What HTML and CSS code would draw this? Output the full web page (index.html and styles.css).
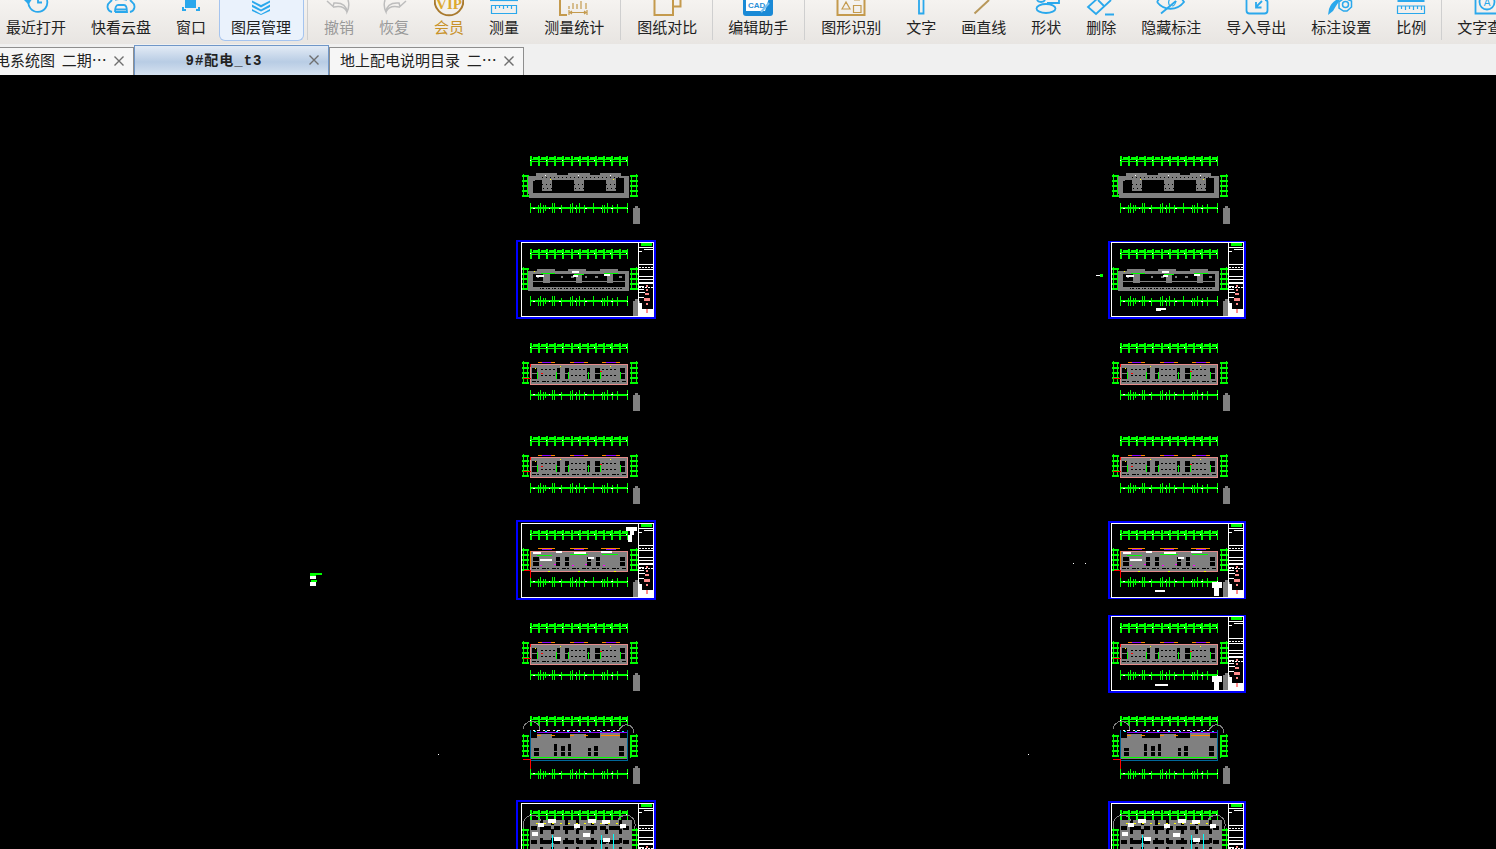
FILE: index.html
```html
<!DOCTYPE html>
<html lang="zh-CN">
<head>
    <meta charset="UTF-8">
    <meta name="viewport" content="width=device-width, initial-scale=1.0">
    <title>9#配电_t3</title>
    <link rel="stylesheet" href="styles.css">
</head>
<body>
    <!-- 工具栏 -->
    <div class="toolbar">
        <div class="tool">
            <svg class="ic blue" viewBox="0 0 30 18"><path d="M7.500 0.500A9.500 9.500 0 1 0 26 0"/><path class="solid" d="M3 0H10.500L7.500 4.500Z"/><path d="M17 -2V2.500H21"/></svg>
            <span>最近打开</span>
        </div>
        <div class="tool">
            <svg class="ic blue" viewBox="0 0 30 18"><path d="M6 12C1 11 0 5 4 2Q5 1 6 0M24 12C29 11 30 5 26 2Q25 1 24 0M9 0Q15 -2 21 0"/><path d="M9 12C9 8 10 5 12 5H18C20 5 21 8 21 12H9M10 9.500H20"/></svg>
            <span>快看云盘</span>
        </div>
        <div class="tool">
            <svg class="ic blue" viewBox="0 0 30 18"><path class="solid" d="M9 -2H20V8H9Z"/><path d="M7 7V10H10M23 7V10H20" stroke-width="2"/></svg>
            <span>窗口</span>
        </div>
        <div class="tool active">
            <svg class="ic blue" viewBox="0 0 30 18"><path class="solid" d="M6 0.500L15 5L24 0.500V2.500L15 7.500L6 2.500Z"/><path class="solid" d="M6 4.500L15 9.500L24 4.500V7L15 11.500L6 7Z"/><path class="solid" d="M6 9L15 14L24 9V11L15 15L6 11Z"/></svg>
            <span>图层管理</span>
        </div>
        <div class="sep"></div>
        <div class="tool off">
            <svg class="ic grey" viewBox="0 0 30 18"><path d="M3 1L9 6.500L10 3Q22 2 23 12Q26 6 24 0"/><path d="M23 12Q20 5 10 7L9 7"/></svg>
            <span>撤销</span>
        </div>
        <div class="tool off">
            <svg class="ic grey" viewBox="0 0 30 18"><path d="M27 1L21 6.500L20 3Q8 2 7 12Q4 6 6 0"/><path d="M7 12Q10 5 20 7L21 7"/></svg>
            <span>恢复</span>
        </div>
        <div class="tool vip">
            <svg class="ic" viewBox="0 0 30 18"><circle class="vip-ring" cx="15" cy="1" r="14.300"/><text class="vip-text" x="15" y="9" text-anchor="middle">VIP</text></svg>
            <span>会员</span>
        </div>
        <div class="tool">
            <svg class="ic blue thin" viewBox="0 0 30 18"><path d="M1 0.500H29"/><path d="M2.500 5.500H27.500V13.500H2.500Z"/><path d="M6.500 5.500V9M10.500 5.500V8M14.500 5.500V9M18.500 5.500V8M22.500 5.500V9"/></svg>
            <span>测量</span>
        </div>
        <div class="tool">
            <svg class="ic gold" viewBox="0 0 30 18"><path d="M1 0V15H8" stroke-width="2"/></svg>
            <svg class="ic-over gold thin" viewBox="0 0 30 18"><path d="M10 6V9M14 3V9M18 4V9M22 1V9M27 3V9"/><path d="M10 10V15M28 10V15M11 12.500H27M13 11L11 12.500L13 14M25 11L27 12.500L25 14"/></svg>
            <span>测量统计</span>
        </div>
        <div class="sep"></div>
        <div class="tool">
            <svg class="ic gold" viewBox="0 0 30 18"><path d="M2.500 0V15H21V0M21 6.500H28.500V0" stroke-width="2"/></svg>
            <span>图纸对比</span>
        </div>
        <div class="sep tight"></div>
        <div class="tool">
            <svg class="ic" viewBox="0 0 30 18"><path class="cad-box" d="M0 -2H30V13Q30 16 27 16H3Q0 16 0 13Z"/><path class="cad-doc" d="M3 -2H26L22 11H3Z"/><text class="cad-text" x="5" y="7.500">CAD</text><path class="cad-pen" d="M26 3L18 12"/></svg>
            <span>编辑助手</span>
        </div>
        <div class="sep"></div>
        <div class="tool">
            <svg class="ic gold" viewBox="0 0 30 18"><path d="M1.500 0V15H28.500V0" stroke-width="2"/><path class="thin" d="M6 9L10 2L14 9ZM17.500 5.500H25V12.500H17.500ZM18 0H24"/></svg>
            <span>图形识别</span>
        </div>
        <div class="tool">
            <svg class="ic blue" viewBox="0 0 30 18"><path d="M13 -2V13.500H17.500V-2"/></svg>
            <span>文字</span>
        </div>
        <div class="tool">
            <svg class="ic tan" viewBox="0 0 30 18"><path d="M5.500 13.500L20 0" stroke-width="2"/></svg>
            <span>画直线</span>
        </div>
        <div class="tool">
            <svg class="ic blue" viewBox="0 0 30 18"><ellipse cx="15" cy="8.500" rx="9.500" ry="4.500"/><path d="M6 0Q7 2 10 2Q13 2 14 0M16 3H28V-2"/></svg>
            <span>形状</span>
        </div>
        <div class="tool">
            <svg class="ic blue" viewBox="0 0 30 18"><path d="M12 -2L2 7L10 14L25 0M19 14.500H28"/><path d="M12 0L18 6"/></svg>
            <span>删除</span>
        </div>
        <div class="tool">
            <svg class="ic blue" viewBox="0 0 30 18"><path d="M1 2C8 11 21 11 28 2L26 -1M1 2L3 -1"/><path d="M5 13.500L20 1"/><path d="M14 -2Q11 4 14.500 6M20 1Q19 6 16 6" class="thin"/></svg>
            <span>隐藏标注</span>
        </div>
        <div class="tool">
            <svg class="ic blue" viewBox="0 0 30 18"><path d="M5.500 0V10.500Q5.500 13.500 8.500 13.500H23.500Q26.500 13.500 26.500 10.500V2Q26.500 0 24 0"/><path d="M21 1L15 7M15 2V7.500H20.500"/></svg>
            <span>导入导出</span>
        </div>
        <div class="tool">
            <svg class="ic blue" viewBox="0 0 30 18"><path class="solid" d="M2 15L3 9Q5 3 10 0L14 0L10 6L7 11Z"/><path d="M20.500 -1L25.500 1V7L21 11H17.500L13 8V2L17 -1Z" stroke-width="1.500"/><circle cx="19.500" cy="4.500" r="3" stroke-width="1.500"/></svg>
            <span>标注设置</span>
        </div>
        <div class="tool">
            <svg class="ic blue thin" viewBox="0 0 30 18"><path d="M1.500 1H28.500" stroke-width="2"/><path d="M1.500 6H28.500V13.500H1.500Z"/><path d="M5.500 6V9M9.500 6V10M13.500 6V9M17.500 6V10M21.500 6V9M25.500 6V10"/></svg>
            <span>比例</span>
        </div>
        <div class="sep tight"></div>
        <div class="tool">
            <svg class="ic blue" viewBox="0 0 30 18"><path d="M3.500 0V13.500H28"/><circle cx="15" cy="2" r="7.500"/><text class="icon-a" x="15" y="6" text-anchor="middle">A</text></svg>
            <span>文字查找</span>
        </div>
    </div>

    <!-- 标签 -->
    <div class="tabbar">
        <div class="tab first">
            <span class="tab-name">低压配电系统图&nbsp;&nbsp;二期⋯</span>
            <svg class="tab-close" viewBox="0 0 10 10"><path d="M0.500 0.500L9.500 9.500M9.500 0.500L0.500 9.500"/></svg>
        </div>
        <div class="tab current">
            <span class="tab-name">9#配电_t3</span>
            <svg class="tab-close" viewBox="0 0 10 10"><path d="M0.500 0.500L9.500 9.500M9.500 0.500L0.500 9.500"/></svg>
        </div>
        <div class="tab">
            <span class="tab-name">地上配电说明目录&nbsp;&nbsp;二⋯</span>
            <svg class="tab-close" viewBox="0 0 10 10"><path d="M0.500 0.500L9.500 9.500M9.500 0.500L0.500 9.500"/></svg>
        </div>
    </div>

    <!-- 图纸区域 -->
    <div class="canvas">
        <svg class="drawing" viewBox="0 75 1496 774" width="1496" height="774" shape-rendering="crispEdges">
            <defs>
                <!-- 轴线标注 -->
                <g id="stripBottom" fill="none" stroke="#0f0">
                    <path d="M530 208H628" stroke-width="2"/>
                    <path d="M530.500 203V213M538.500 205V213M540.500 203V213M543.500 205V213M545.500 205V211M552.500 203V213M554.500 203V213M561.500 205V213M570.500 204V213M572.500 203V213M576.500 205V213M579.500 203V213M584.500 205V213M593.500 203V213M602.500 205V213M604.500 205V213M607.500 203V213M612.500 205V213M617.500 204V213M627.500 203V213" stroke-width="1.500"/>
                    <path d="M533 208H628" stroke="#fff" stroke-dasharray="2 14 1 9"/>
                </g>
                <g id="stripMain" fill="none" stroke="#0f0">
                    <path d="M530 159.500H628M530 161.500H628"/>
                    <path d="M530 161H628" stroke-width="10" stroke-dasharray="2 6.100"/>
                    <path d="M533 158H628" stroke-width="2" stroke-dasharray="5 3.100"/>
                    <path d="M523.500 174V197M527.500 176V195"/>
                    <path d="M525.500 175V197" stroke-width="7" stroke-dasharray="2 3"/>
                    <path d="M631.500 176V195M636.500 174V197"/>
                    <path d="M634 175V197" stroke-width="8" stroke-dasharray="2 3"/>
                    <path d="M530 160.500H628" stroke="#fff" stroke-dasharray="1 15"/>
                    <path d="M633 208H635V206H638V208H640V224H633Z" fill="#808080" stroke="none"/>
                </g>
                <g id="strips">
                    <use href="#stripMain"/>
                    <use href="#stripBottom"/>
                </g>

                <!-- 平面 A -->
                <g id="planA">
                    <path fill="#808080" d="M528 176H536V173H557V175H568V173H590V175H600V173H621V176H629V198H529V194H528ZM533 181V193H624V178H616V191H606V180H584V191H574V180H552V191H542V180H535V181Z"/>
                    <path fill="none" stroke="#000" d="M542 177H622M542 184H616M543 188H616" stroke-dasharray="1 3"/>
                    <path fill="#fff" d="M545 175h1v1h-1zM578 175h1v1h-1zM610 175h1v1h-1z"/>
                    <path fill="#ff0" d="M550 179h1v1h-1zM613 179h1v1h-1z"/>
                </g>

                <!-- 平面 B -->
                <g id="planB">
                    <path fill="#808080" d="M528 178H537V176H555V178H568V176H586V178H600V176H618V178H629V198H528ZM533 181V194H625V181H613V190H607V181H582V190H576V181H550V190H543V181Z"/>
                    <path fill="none" stroke="#808080" d="M533 188H625"/>
                    <path fill="none" stroke="#000" d="M540 195.500H624" stroke-dasharray="1 1 2 2"/>
                    <path fill="none" stroke="#808080" d="M537 184H622" stroke-width="2" stroke-dasharray="2 8 3 11"/>
                    <path fill="none" stroke="#0f0" d="M541 180.500H555M574 181.500H584M604 180.500H618"/>
                    <path fill="none" stroke="#fff" stroke-width="2" d="M536 182.500H544M572 179H579M573 183H578M604 182H610"/>
                    <path fill="#ff0" d="M534 178h1v1h-1z"/>
                </g>

                <!-- 平面 C -->
                <g id="planC">
                    <path fill="#808080" d="M530 177H628V198H530Z"/>
                    <path fill="#000" d="M532 181h5v11h-5zM557 181h3v11h-3zM565 181h4v11h-4zM587 181h3v11h-3zM595 181h5v11h-5zM620 181h5v11h-5z"/>
                    <path fill="none" stroke="#808080" d="M532 186.500H625"/>
                    <path fill="none" stroke="#000" d="M541 183H556M571 183H586M602 183H618M541 189H556M571 189H586M602 189H618" stroke-dasharray="2 2"/>
                    <path fill="none" stroke="#000" d="M532 194.500H626" stroke-dasharray="4 1 2 3"/>
                    <path fill="none" stroke="#e58a8a" d="M530.500 177.500H627.500V197.500H530.500Z"/>
                    <path fill="none" stroke="#0f0" d="M537.500 185V192M556.500 185V192M568.500 185V192M588.500 185V192M600.500 185V192M620.500 185V192"/>
                    <path fill="none" stroke="#f80" d="M538 175.500H542M551 175.500H555M570 175.500H574M584 175.500H588M602 175.500H606M616 175.500H620"/>
                    <path fill="none" stroke="#80f" d="M542 175.500H551M574 175.500H584M606 175.500H616"/>
                    <path fill="#f00" d="M523 191h8v1h-8zM530 177h1v3h-1zM541 186h2v1h-2zM600 184h2v1h-2z"/>
                    <path fill="#ff0" d="M535 181h1v1h-1zM560 179h1v1h-1zM610 179h1v1h-1z"/>
                </g>

                <!-- 平面 E -->
                <g id="planE">
                    <path fill="#808080" d="M530 177H628V197H530Z"/>
                    <path fill="#000" d="M533 183h6v9h-6zM556 183h4v9h-4zM565 183h4v9h-4zM587 183h4v9h-4zM596 183h4v9h-4zM620 183h5v9h-5z"/>
                    <path fill="none" stroke="#808080" d="M532 187.500H625"/>
                    <path fill="none" stroke="#000" d="M532 194.500H626" stroke-dasharray="4 1 2 3"/>
                    <path fill="none" stroke="#e58a8a" d="M530.500 177.500H627.500V197.500H530.500Z"/>
                    <path fill="none" stroke="#f80" d="M530.500 177V193M538 175H555M570 175H588M601 175H620"/>
                    <path fill="none" stroke="#80f" d="M542 175.500H552M574 175.500H584M606 175.500H616"/>
                    <path fill="none" stroke="#fff" stroke-width="2" d="M533 179H541M540 186H552M556 178H562M574 179H586M601 178H612M588 184H594"/>
                    <path fill="none" stroke="#0f0" d="M537 182H552M570 181H588M602 181H618"/>
                    <path fill="#f0f" d="M540 191h2v1h-2zM572 191h2v1h-2zM603 191h2v1h-2zM554 190h2v1h-2zM585 190h2v1h-2z"/>
                    <path fill="#ff0" d="M548 197h2v1h-2zM578 197h2v1h-2zM614 197h2v1h-2z"/>
                    <path fill="#f00" d="M530 196h1v8h-1zM524 196h7v1h-7z"/>
                </g>

                <!-- 平面 G -->
                <g id="planG">
                    <path fill="#808080" d="M531 178H537V174H552V178H570V174H586V178H600V173H620V178H627V199H531Z"/>
                    <path fill="#000" d="M534 188h5v8h-5zM554 184h3v12h-3zM561 186h4v10h-4zM568 184h3v12h-3zM588 188h3v8h-3zM594 186h4v10h-4zM619 186h5v10h-5z"/>
                    <path fill="none" stroke="#808080" d="M532 191.500H625"/>
                    <path fill="none" stroke="#069" d="M530.500 169.500V200.500H627.500V169.500"/>
                    <path fill="none" stroke="#80f" d="M537 172.500H627"/>
                    <path fill="none" stroke="#fff" stroke-dasharray="2 2 3 3" d="M533 170.500H622"/>
                    <path fill="none" stroke="#0ff" stroke-dasharray="2 9" d="M534 171.500H625"/>
                    <path fill="none" stroke="#808080" d="M523 169A8 8 0 0 1 540 170M619 171A7 7 0 0 1 634 173"/>
                    <path fill="none" stroke="#f80" d="M537 175H541M551 175H555M570 175H574M584 175H588M601 175H620"/>
                    <path fill="none" stroke="#0f0" d="M630 175V198M531 197.500H627"/>
                    <path fill="#f00" d="M530 200h1v9h-1zM523 199h8v1h-8z"/>
                </g>

                <!-- 平面 H -->
                <g id="planH">
                    <path fill="#808080" d="M530 166H632V215H530Z"/>
                    <path fill="none" stroke="#000" stroke-width="4" d="M531 174H630M531 188H630M531 200H630" stroke-dasharray="6 3 11 3"/>
                    <path fill="none" stroke="#000" stroke-width="3" d="M541 166V215M552 166V215M566 166V215M577 166V215M592 166V215M606 166V215M620 166V215" stroke-dasharray="5 4"/>
                    <path fill="none" stroke="#fff" stroke-width="4" d="M538 171H544M548 167H556M574 172H580M588 167H596M602 168H610M532 180H538M554 185H561M583 181H590M603 186H610M620 172H626"/>
                    <path fill="none" stroke="#0ff" d="M552 181V200M560 196H566M613 180V200M601 181V198M538 197H546"/>
                    <path fill="none" stroke="#0f0" d="M586 196H596V207H586Z"/>
                    <path fill="none" stroke="#ff0" stroke-dasharray="2 6" d="M536 170H620"/>
                    <path fill="none" stroke="#808080" d="M524 174A9 9 0 0 1 541 167M618 166A8 8 0 0 1 634 175"/>
                </g>

                <!-- 图框 -->
                <g id="sheet">
                    <path fill="none" stroke="#fff" d="M521.500 149.500H653.500V223.500H521.500Z"/>
                    <path fill="none" stroke="#fff" d="M638.500 149.500V223.500"/>
                    <path fill="#0f0" d="M641 150H652V153H641Z"/>
                    <path fill="#fff" d="M639 154H653V155H639ZM644 156H653V157H644ZM639 158H642V159H639ZM639 171H653V172H639ZM639 176H653V177H639ZM639 183H653V184H639ZM639 186H653V187H639ZM639 189H653V191H639ZM639 193H644V194H639ZM639 196H644V197H639ZM639 199H645V200H639ZM639 204H644V205H639ZM639 210H642V216H639ZM639 216H653V223H639Z"/>
                    <path fill="none" stroke="#fff" stroke-dasharray="2 1" d="M639 174.500H653M639 194.500H653"/>
                    <path fill="#ff8a8a" d="M646 192H648V194H646ZM646 196H648V198H646ZM645 200H649V202H645ZM644 205H650V208H644ZM646 210H648V212H646ZM646 216H648V220H646Z"/>
                </g>
                <path id="frameL" fill="none" stroke="#00f" stroke-width="2" d="M517 147.500H655V225H517Z"/>
                <path id="frameR" fill="none" stroke="#00f" stroke-width="2" d="M519 148.500H655V224.500H519Z"/>

                <g id="column">
                    <use href="#strips"/>
                    <use href="#planA"/>
                    <g transform="translate(0,93.400)"><use href="#strips"/><use href="#planB"/></g>
                    <g transform="translate(0,186.800)"><use href="#strips"/><use href="#planC"/></g>
                    <g transform="translate(0,280.200)"><use href="#strips"/><use href="#planC"/></g>
                    <g transform="translate(0,373.600)"><use href="#strips"/><use href="#planE"/></g>
                    <g transform="translate(0,467)"><use href="#strips"/><use href="#planC"/></g>
                    <g transform="translate(0,560.400)"><use href="#stripMain"/><use href="#stripBottom" y="5.500"/><use href="#planG"/></g>
                    <g transform="translate(0,653.800)"><use href="#strips"/><use href="#planH"/></g>
                    <use href="#sheet" transform="translate(0,93.400)"/>
                    <use href="#sheet" transform="translate(0,373.600)"/>
                    <use href="#sheet" transform="translate(0,653.800)"/>
                </g>
            </defs>

            <use href="#frameL" transform="translate(0,93.400)"/>
            <use href="#frameL" transform="translate(0,373.600)"/>
            <use href="#frameL" transform="translate(0,653.800)"/>
            <use href="#frameR" transform="translate(590,93.400)"/>
            <use href="#frameR" transform="translate(590,373.600)"/>
            <use href="#frameR" transform="translate(590,467)"/>
            <use href="#frameR" transform="translate(590,653.800)"/>
            <use href="#column"/>
            <use href="#column" transform="translate(590,0)"/>
            <use href="#sheet" transform="translate(590,467)"/>

            <!-- 零散图元 -->
            <path fill="#fff" d="M626 527H637V531H634V535H632V542H628V535H630V531H626Z"/>
            <path fill="#0f0" d="M310 573H322V575H316V578H310ZM311 580H317V582H311Z"/>
            <path fill="#fff" d="M310 576H316V579H310ZM310 582H316V586H310Z"/>
            <path fill="#0f0" d="M1100 274H1103V277H1100Z"/>
            <path fill="#fff" d="M1096 275H1100V276H1096Z"/>
            <path fill="#fff" d="M1156 308H1166V310H1161V311H1156ZM1155 590H1165V592H1155ZM1155 684H1168V686H1155ZM1212 582H1222V588H1219V596H1214V588H1212ZM1212 676H1222V682H1219V690H1214V682H1212Z"/>
            <path fill="#fff" d="M1073 563h1v1h-1zM1085 563h1v1h-1zM438 754h1v1h-1zM1028 754h1v1h-1z"/>
        </svg>
    </div>
</body>
</html>
```

FILE: styles.css
```css
body {
    margin: 0;
    width: 1496px;
    height: 849px;
    overflow: hidden;
    background-color: #000;
    font-family: "Noto Sans CJK SC", "Liberation Sans", sans-serif;
}
.toolbar {
    display: flex;
    height: 44px;
    overflow: hidden;
    background: linear-gradient(#f5f3f0, #e8e5e2);
}
.tool {
    position: relative;
    flex: none;
    display: flex;
    flex-direction: column;
    align-items: center;
    height: 41px;
    padding: 0 12.5px;
    box-sizing: border-box;
    color: #222;
    font-size: 15px;
}
.tool:first-child {
    margin-left: -6.5px;
}
.tool span {
    height: 20px;
    margin-top: -1px;
    line-height: 20px;
    white-space: nowrap;
}
.tool.active {
    background-color: #eaf2fc;
    border: 1px solid #a5c4ef;
    border-top: 0;
    border-radius: 0 0 6px 6px;
    padding: 0 11.5px;
}
.tool.off {
    color: #999;
}
.tool.vip {
    color: #c8922a;
}
.sep {
    flex: none;
    width: 1px;
    height: 40px;
    margin: 0 3.5px;
    background-color: #cfcfcf;
}
.sep.tight {
    margin: 0 2.5px;
}
.ic {
    display: block;
    flex: none;
    width: 30px;
    height: 18px;
    fill: none;
    stroke-width: 1.8;
}
.ic-over {
    position: absolute;
    top: 0;
    left: 50%;
    width: 30px;
    height: 18px;
    margin-left: -15px;
    fill: none;
}
.blue {
    stroke: #2aa8ec;
}
.grey {
    stroke: #bdbdbd;
    stroke-width: 1.5;
}
.gold {
    stroke: #c49a4d;
}
.tan {
    stroke: #b8985a;
}
.thin {
    stroke-width: 1.2;
}
.solid {
    fill: #2aa8ec;
    stroke: none;
}
.vip-ring {
    stroke: #a97a2e;
    stroke-width: 2;
}
.vip-text {
    fill: #dca92f;
    stroke: none;
    font-family: "Liberation Serif", serif;
    font-size: 15px;
    font-weight: bold;
}
.cad-box {
    fill: #1a8ad6;
    stroke: none;
}
.cad-doc {
    fill: #fff;
    stroke: none;
}
.cad-text {
    fill: #2a8fd8;
    stroke: none;
    font-family: "Liberation Sans", sans-serif;
    font-size: 8px;
    font-weight: bold;
}
.cad-pen {
    stroke: #7cc0ee;
    stroke-width: 2;
}
.icon-a {
    fill: #2aa8ec;
    stroke: none;
    font-family: "Liberation Sans", sans-serif;
    font-size: 10px;
}
.tabbar {
    display: flex;
    align-items: flex-end;
    height: 31px;
    overflow: hidden;
    background-color: #f0f0f0;
}
.tab {
    position: relative;
    flex: none;
    display: flex;
    align-items: center;
    width: 195px;
    height: 28px;
    padding: 0 0 4px 10px;
    box-sizing: border-box;
    background-color: #f6f6f6;
    border: 1px solid #8e8e8e;
    border-bottom: 0;
    color: #222;
    font-size: 15px;
}
.tab.first {
    margin-left: -61px;
}
.tab.current {
    height: 30px;
    padding: 0 0 3px 0;
    justify-content: center;
    background: linear-gradient(#e3ebf5, #b8cce4 55%, #d6e2f0);
    border-color: #7097c8;
}
.tab-name {
    white-space: nowrap;
}
.tab.current .tab-name {
    font-family: "Liberation Mono", "Noto Sans CJK SC", monospace;
    font-size: 14px;
    font-weight: bold;
    letter-spacing: 1px;
    margin-right: 15px;
}
.tab-close {
    position: absolute;
    top: 50%;
    right: 9px;
    width: 10px;
    height: 10px;
    margin-top: -6px;
    fill: none;
    stroke: #6f6f6f;
    stroke-width: 1.4;
}
.canvas {
    height: 774px;
    background-color: #000;
}
.drawing {
    display: block;
}
```
